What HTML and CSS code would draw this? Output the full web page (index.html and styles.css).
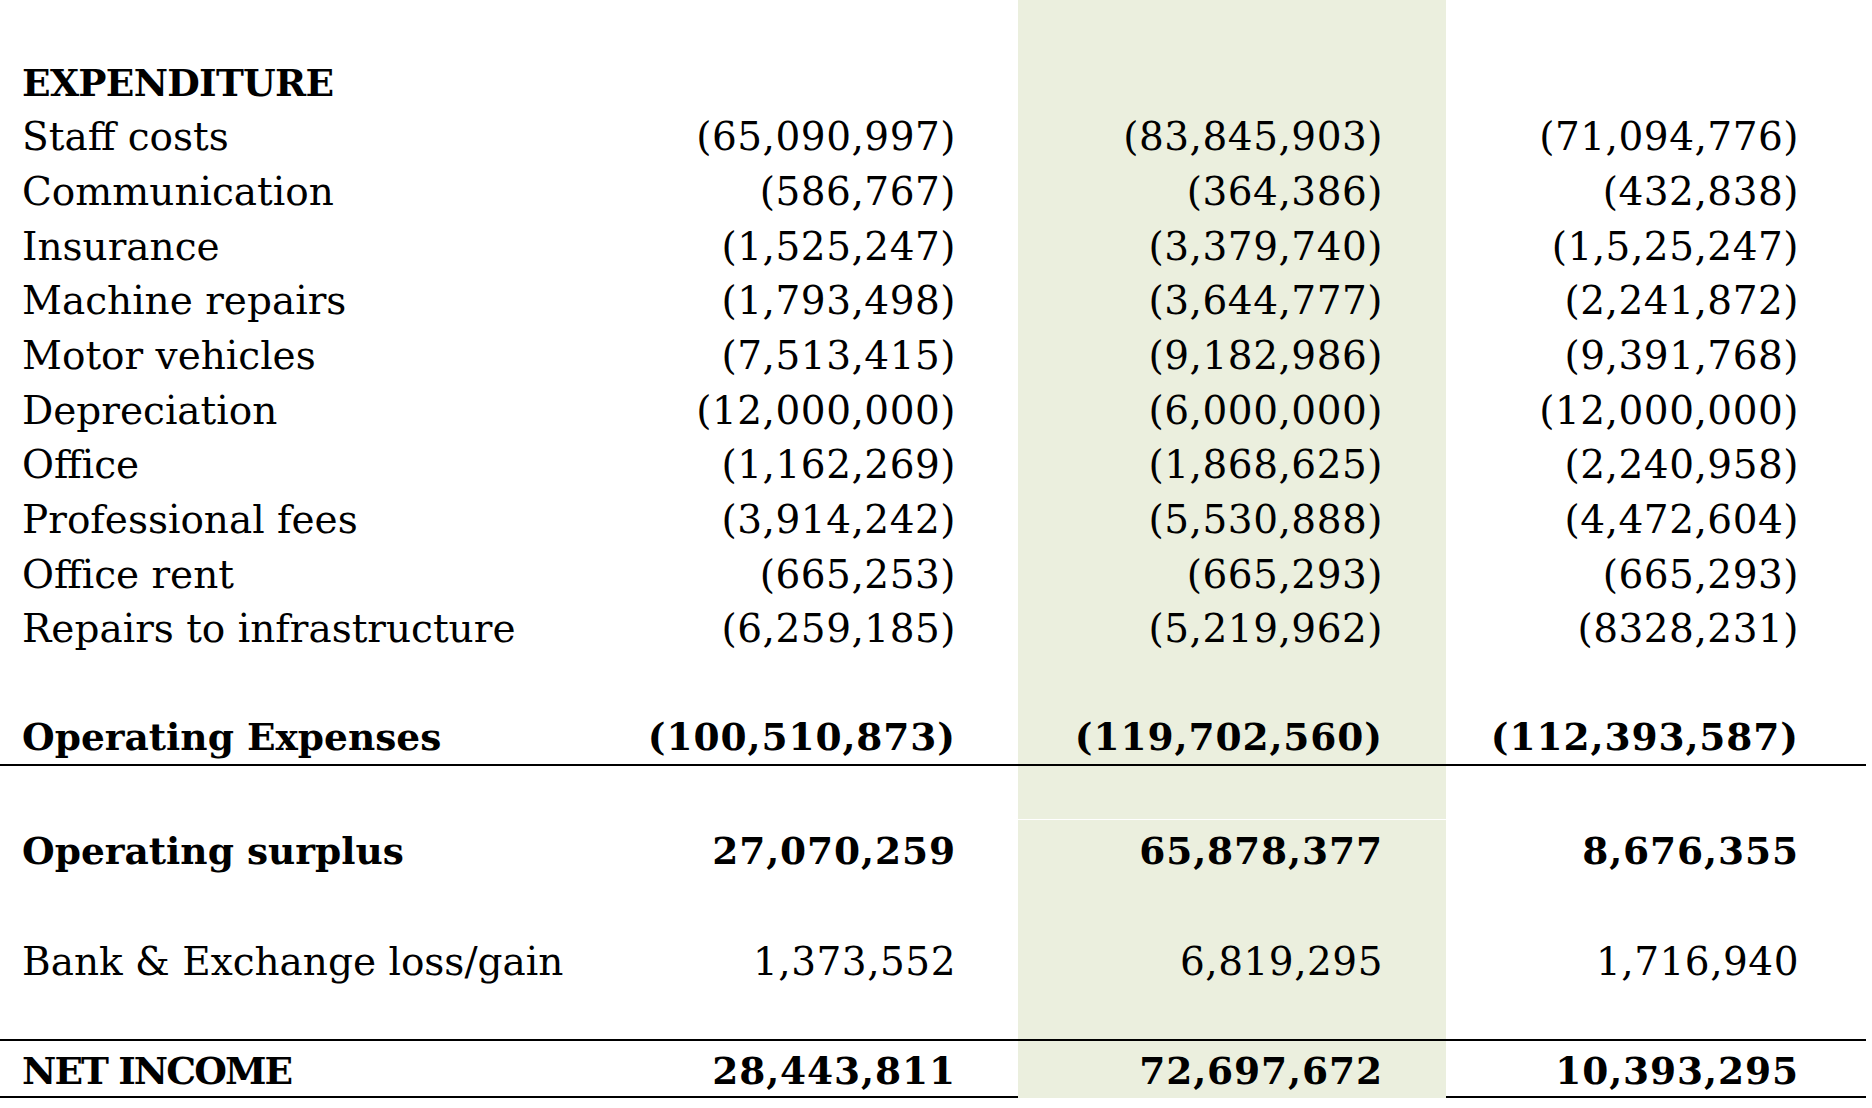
FILE: index.html
```html
<!DOCTYPE html>
<html lang="en">
<head>
<meta charset="utf-8">
<title>Expenditure</title>
<link rel="stylesheet" href="styles.css">
</head>
<body>
<div class="sheet">
  <div class="row spacer-top"><div class="lbl"></div><div class="num"></div><div class="num g"></div><div class="num"></div></div>
  <div class="row bold"><div class="lbl caps-a">EXPENDITURE</div><div class="num"></div><div class="num g"></div><div class="num"></div></div>
  <div class="row"><div class="lbl">Staff costs</div><div class="num">(65,090,997)</div><div class="num g">(83,845,903)</div><div class="num">(71,094,776)</div></div>
  <div class="row"><div class="lbl">Communication</div><div class="num">(586,767)</div><div class="num g">(364,386)</div><div class="num">(432,838)</div></div>
  <div class="row"><div class="lbl">Insurance</div><div class="num">(1,525,247)</div><div class="num g">(3,379,740)</div><div class="num">(1,5,25,247)</div></div>
  <div class="row"><div class="lbl">Machine repairs</div><div class="num">(1,793,498)</div><div class="num g">(3,644,777)</div><div class="num">(2,241,872)</div></div>
  <div class="row"><div class="lbl">Motor vehicles</div><div class="num">(7,513,415)</div><div class="num g">(9,182,986)</div><div class="num">(9,391,768)</div></div>
  <div class="row"><div class="lbl">Depreciation</div><div class="num">(12,000,000)</div><div class="num g">(6,000,000)</div><div class="num">(12,000,000)</div></div>
  <div class="row"><div class="lbl">Office</div><div class="num">(1,162,269)</div><div class="num g">(1,868,625)</div><div class="num">(2,240,958)</div></div>
  <div class="row"><div class="lbl">Professional fees</div><div class="num">(3,914,242)</div><div class="num g">(5,530,888)</div><div class="num">(4,472,604)</div></div>
  <div class="row"><div class="lbl">Office rent</div><div class="num">(665,253)</div><div class="num g">(665,293)</div><div class="num">(665,293)</div></div>
  <div class="row"><div class="lbl">Repairs to infrastructure</div><div class="num">(6,259,185)</div><div class="num g">(5,219,962)</div><div class="num">(8328,231)</div></div>
  <div class="row"><div class="lbl"></div><div class="num"></div><div class="num g"></div><div class="num"></div></div>
  <div class="row bold opex"><div class="lbl">Operating Expenses</div><div class="num">(100,510,873)</div><div class="num g">(119,702,560)</div><div class="num">(112,393,587)</div></div>
  <div class="row gap"><div class="lbl"></div><div class="num"></div><div class="num g"></div><div class="num"></div></div>
  <div class="row bold surplus"><div class="lbl">Operating surplus</div><div class="num">27,070,259</div><div class="num g">65,878,377</div><div class="num">8,676,355</div></div>
  <div class="row bank"><div class="lbl">Bank &amp; Exchange loss/gain</div><div class="num">1,373,552</div><div class="num g">6,819,295</div><div class="num">1,716,940</div></div>
  <div class="row bold net"><div class="lbl caps-b">NET INCOME</div><div class="num">28,443,811</div><div class="num g">72,697,672</div><div class="num">10,393,295</div></div>
  <div class="corner"></div>
</div>
</body>
</html>
```

FILE: styles.css
```css
html, body {
  margin: 0;
  padding: 0;
  background: #ffffff;
}

body {
  font-family: "DejaVu Serif", "Liberation Serif", serif;
  font-size: 39px;
  color: #000000;
}

.sheet {
  position: relative;
  width: 1866px;
}

.row {
  display: grid;
  grid-template-columns: 598px 420px 428px 420px;
  height: 54.67px;
  line-height: 54.67px;
  white-space: nowrap;
}

.row > div {
  height: 100%;
  box-sizing: border-box;
}

.lbl {
  padding-left: 22px;
}

.num {
  text-align: right;
  padding-right: 62px;
  letter-spacing: 0.5px;
}

.num.g {
  background: #ebefde;
  padding-right: 63px;
}

.row > .num:last-child {
  padding-right: 67px;
}

.bold {
  font-weight: bold;
  font-size: 37.5px;
}

.bold > .num {
  letter-spacing: 0.9px;
}

.caps-a {
  letter-spacing: -0.7px;
}

.caps-b {
  letter-spacing: -1.9px;
}

.spacer-top {
  height: 55.7px;
}

.opex {
  height: 54.67px;
  box-sizing: border-box;
  border-bottom: 2px solid #000;
  line-height: 50px;
}

.gap {
  height: 54px;
}

.gap > .g {
  border-bottom: 1px solid #ffffff;
}

.surplus {
  height: 110px;
}

.surplus > div {
  padding-top: 4px;
}

.bank {
  height: 109px;
}

.bank > div {
  padding-top: 5px;
}

.net {
  height: 59px;
  box-sizing: border-box;
  border-top: 2px solid #000;
  border-bottom: 2px solid #000;
}

.net > div {
  padding-top: 3px;
}

.corner {
  position: absolute;
  left: 1866px;
  top: 1100px;
  width: 5px;
  height: 8px;
  border-left: 1px solid #c8c8c8;
  border-top: 1px solid #c8c8c8;
}
```
